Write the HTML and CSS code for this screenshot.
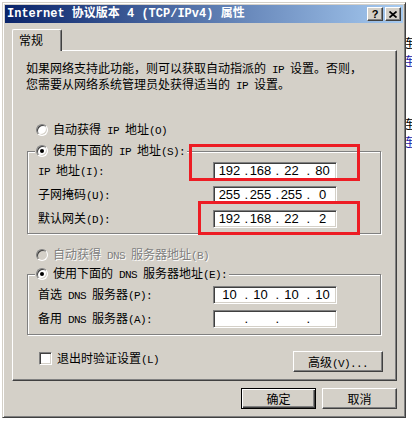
FILE: index.html
```html
<!DOCTYPE html>
<html lang="zh-CN">
<head>
<meta charset="utf-8">
<title>Internet 协议版本 4 (TCP/IPv4) 属性</title>
<link rel="stylesheet" href="styles.css">
</head>
<body>
<div class="desktop">
  <div class="behind">
    <span class="bg-ch c1">连</span>
    <span class="bg-ch c2">连</span>
    <span class="bg-ch c3">连</span>
    <span class="bg-ch c4">连</span>
  </div>

  <div class="dialog">
    <div class="titlebar">
      <span class="title">Internet 协议版本 4 (TCP/IPv4) 属性</span>
      <div class="caption-btns">
        <span class="cap-btn help">?</span>
        <span class="cap-btn close">
          <svg width="8" height="7" viewBox="0 0 8 7"><path d="M0.5 0.5 L7.5 6.5 M7.5 0.5 L0.5 6.5" stroke="#000" stroke-width="1.7" fill="none"/></svg>
        </span>
      </div>
    </div>

    <div class="client">
      <div class="tabs"><div class="tab">常规</div></div>

      <div class="panel">
        <p class="intro">如果网络支持此功能，则可以获取自动指派的<span class="en"> IP </span>设置。否则，<br>您需要从网络系统管理员处获得适当的<span class="en"> IP </span>设置。</p>

        <div class="radio-row first"><span class="radio"></span><span class="txt">自动获得<span class="en"> IP </span>地址<span class="en">(O)</span></span></div>

        <fieldset class="group ip-group">
          <legend><span class="radio-row"><span class="radio on"></span><span class="txt">使用下面的<span class="en"> IP </span>地址<span class="en">(S):</span></span></span></legend>
          <div class="rows">
            <div class="field-row"><span class="lbl"><span class="en">IP </span>地址<span class="en">(I):</span></span>
              <div class="ipbox"><span class="oct">192</span><span class="dot">.</span><span class="oct">168</span><span class="dot">.</span><span class="oct">22</span><span class="dot">.</span><span class="oct">80</span></div></div>
            <div class="field-row"><span class="lbl">子网掩码<span class="en">(U):</span></span>
              <div class="ipbox"><span class="oct">255</span><span class="dot">.</span><span class="oct">255</span><span class="dot">.</span><span class="oct">255</span><span class="dot">.</span><span class="oct">0</span></div></div>
            <div class="field-row"><span class="lbl">默认网关<span class="en">(D):</span></span>
              <div class="ipbox"><span class="oct">192</span><span class="dot">.</span><span class="oct">168</span><span class="dot">.</span><span class="oct">22</span><span class="dot">.</span><span class="oct">2</span></div></div>
          </div>
        </fieldset>

        <div class="radio-row dns-auto disabled"><span class="radio off"></span><span class="txt">自动获得<span class="en"> DNS </span>服务器地址<span class="en">(B)</span></span></div>

        <fieldset class="group dns-group">
          <legend><span class="radio-row"><span class="radio on"></span><span class="txt">使用下面的<span class="en"> DNS </span>服务器地址<span class="en">(E):</span></span></span></legend>
          <div class="rows">
            <div class="field-row"><span class="lbl">首选<span class="en"> DNS </span>服务器<span class="en">(P):</span></span>
              <div class="ipbox"><span class="oct">10</span><span class="dot">.</span><span class="oct">10</span><span class="dot">.</span><span class="oct">10</span><span class="dot">.</span><span class="oct">10</span></div></div>
            <div class="field-row"><span class="lbl">备用<span class="en"> DNS </span>服务器<span class="en">(A):</span></span>
              <div class="ipbox"><span class="oct"></span><span class="dot">.</span><span class="oct"></span><span class="dot">.</span><span class="oct"></span><span class="dot">.</span><span class="oct"></span></div></div>
          </div>
        </fieldset>

        <div class="bottom-row">
          <label class="check"><span class="checkbox"></span><span class="txt">退出时验证设置<span class="en">(L)</span></span></label>
          <button class="btn adv">高级<span class="en">(V)...</span></button>
        </div>
      </div>

      <div class="actions">
        <button class="btn default">确定</button>
        <button class="btn">取消</button>
      </div>
    </div>
  </div>

  <div class="mark m1"></div>
  <div class="mark m2"></div>
</div>
</body>
</html>
```

FILE: styles.css
```css
* { box-sizing: border-box; }
html, body { margin: 0; padding: 0; }
body {
  background: #fff;
  font-family: "Noto Sans CJK SC", "Noto Sans", sans-serif;
  font-size: 12px;
  color: #000;
}
.desktop { position: relative; width: 412px; height: 431px; overflow: hidden; }

/* window behind the dialog */
.behind { position: absolute; left: 0; top: 0; width: 412px; height: 431px; }
.bg-ch { position: absolute; left: 402px; font-size: 12px; line-height: 12px; }
.c1 { top: 37px; color: #000; }
.c2 { top: 55px; color: #1a1aa8; }
.c3 { top: 118px; color: #000; }
.c4 { top: 136px; color: #1a1aa8; }

/* dialog frame */
.dialog {
  position: absolute; left: 2px; top: 2px;
  width: 404px; height: 416px;
  background: #d4d0c8;
  border: 1px solid; border-color: #d4d0c8 #404040 #404040 #d4d0c8;
  box-shadow: inset 1px 1px 0 #fff, inset -1px -1px 0 #808080;
  padding: 2px;
  display: flex; flex-direction: column;
}
.titlebar {
  height: 18px; flex: 0 0 18px;
  background: linear-gradient(to right, #0a246a, #a6caf0);
  display: flex; align-items: center; justify-content: space-between;
  padding: 0 2px 0 2px;
}
.title {
  color: #fff; font-weight: bold; font-size: 12px; line-height: 14px;
  font-family: "Liberation Mono", "Noto Sans CJK SC", monospace;
  white-space: nowrap;
}
.caption-btns { display: flex; gap: 2px; }
.cap-btn {
  width: 16px; height: 14px;
  background: #d4d0c8;
  border: 1px solid; border-color: #fff #404040 #404040 #fff;
  box-shadow: inset -1px -1px 0 #808080, inset 1px 1px 0 #d4d0c8;
  display: flex; align-items: center; justify-content: center;
}
.help { font-family: "Liberation Sans", sans-serif; font-weight: bold; font-size: 11px; line-height: 12px; }
.close svg { display: block; }

.client {
  flex: 1; display: flex; flex-direction: column;
  padding: 6px 6px 6px 7px;
}
.tabs { display: flex; height: 21px; }
.tab {
  position: relative; z-index: 1;
  width: 50px; height: 22px; margin-bottom: -1px;
  background: #d4d0c8;
  border-top: 1px solid #fff; border-left: 1px solid #fff; border-right: 1px solid #404040;
  border-radius: 2px 2px 0 0;
  box-shadow: inset -1px 0 0 #808080;
  padding-left: 6px; line-height: 19px;
}
.panel {
  height: 331px; flex: 0 0 331px;
  border: 1px solid; border-color: #fff #404040 #404040 #fff;
  box-shadow: inset -1px -1px 0 #808080;
  display: flex; flex-direction: column;
}
.intro { margin: 10px 0 0 13px; line-height: 13px; white-space: nowrap; }
.en { font-family: "Liberation Mono", monospace; font-size: 11px; letter-spacing: -0.6px; }

.radio-row { display: flex; align-items: center; height: 16px; gap: 5px; white-space: nowrap; line-height: 13px; }
.radio-row.first { margin: 29px 0 0 23px; }
.radio {
  width: 12px; height: 12px; flex: 0 0 12px; border-radius: 50%;
  background: #fff;
  border: 1px solid; border-color: #808080 #fff #fff #808080;
  box-shadow: inset 1px 1px 0 #404040, inset -1px -1px 0 #d4d0c8;
  display: flex; align-items: center; justify-content: center;
}
.radio.on::after { content: ""; width: 4px; height: 4px; border-radius: 50%; background: #000; }
.radio.off { background: #d4d0c8; }
.disabled .txt { color: #808080; text-shadow: 1px 1px 0 #fff; }

.group {
  margin: 5px 15px 0 14px; min-width: 0;
  border: 1px solid #808080;
  box-shadow: inset 1px 1px 0 #fff, 1px 1px 0 #fff;
  padding: 3px 0 5px 10px;
}
.group legend { padding: 0 2px 0 1px; margin-left: -3px; background: #d4d0c8; }
.dns-group { margin-top: 3px; padding-top: 4px; padding-bottom: 6px; }
.dns-auto { margin: 13px 0 0 23px; }
.rows { display: flex; flex-direction: column; gap: 6px; }
.field-row { display: flex; align-items: center; height: 18px; }
.lbl { flex: 0 0 175px; white-space: nowrap; line-height: 13px; }
.ipbox {
  width: 124px; height: 18px;
  background: #fff;
  border: 1px solid; border-color: #808080 #fff #fff #808080;
  box-shadow: inset 1px 1px 0 #404040, inset -1px -1px 0 #d4d0c8;
  display: flex; padding-left: 3px;
  font-family: "Liberation Sans", sans-serif; font-size: 13px; line-height: 16px;
}
.oct { width: 25px; text-align: center; }
.dot { width: 6px; text-align: right; }

.bottom-row { display: flex; align-items: flex-start; margin: 16px 13px 0 26px; }
.check { display: flex; align-items: center; gap: 5px; margin-top: 1px; height: 13px; line-height: 13px; white-space: nowrap; }
.checkbox {
  width: 13px; height: 13px;
  background: #fff;
  border: 1px solid; border-color: #808080 #fff #fff #808080;
  box-shadow: inset 1px 1px 0 #404040, inset -1px -1px 0 #d4d0c8;
}
.btn {
  font-family: "Noto Sans CJK SC", sans-serif; font-size: 12px; color: #000;
  height: 21px; width: 75px; padding: 0; line-height: 19px;
  background: #d4d0c8;
  border: 1px solid; border-color: #fff #404040 #404040 #fff;
  box-shadow: inset -1px -1px 0 #808080, inset 1px 1px 0 #d4d0c8;
}
.btn.adv { width: 90px; margin-left: auto; }
.btn.default {
  border: 1px solid #000;
  box-shadow: inset 1px 1px 0 #fff, inset -1px -1px 0 #404040, inset -2px -2px 0 #808080;
}
.actions { display: flex; justify-content: flex-end; gap: 6px; margin-top: 7px; }

/* red annotation boxes */
.mark { position: absolute; border: 3px solid #ed1c24; }
.m1 { left: 189px; top: 144px; width: 171px; height: 37px; }
.m2 { left: 198px; top: 201px; width: 162px; height: 34px; }
```
